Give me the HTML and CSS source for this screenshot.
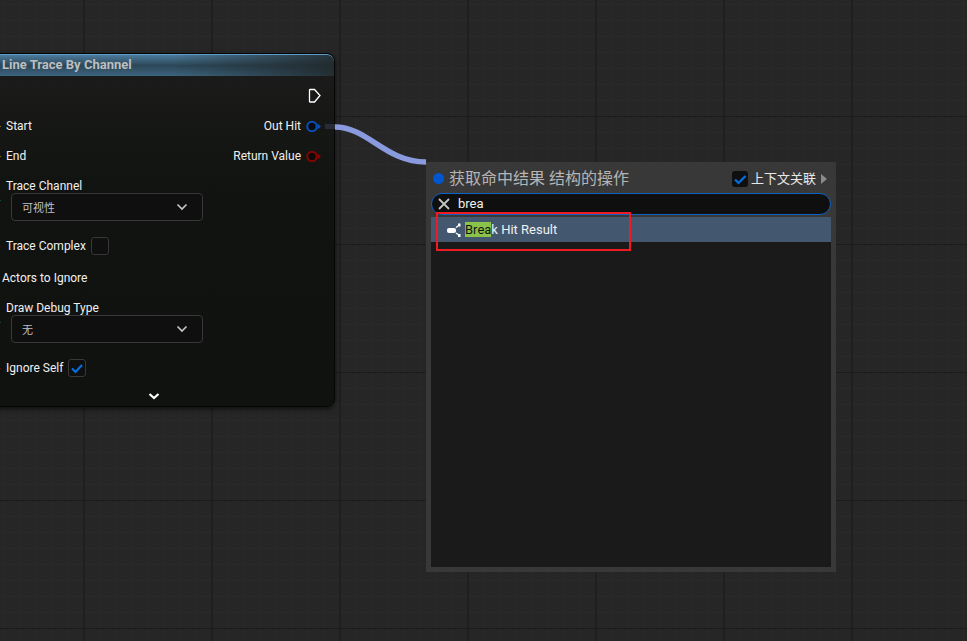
FILE: index.html
```html
<!DOCTYPE html>
<html lang="zh">
<head>
<meta charset="utf-8">
<title>Blueprint Graph</title>
<link rel="stylesheet" href="styles.css">
</head>
<body>
<main class="graph">
  <section class="node">
    <h1 class="node-title">Line Trace By Channel</h1>
    <div class="node-body">
      <div class="pins">
        <div class="pin-row end">
          <svg class="exec" width="14" height="16" viewBox="0 0 14 16"><path d="M3 1.500h4.500l5.500 6-5.500 6.500h-4.500q-.5 0-.5-.8V2.300q0-.8.5-.8z" fill="none" stroke="#fff" stroke-width="1.300"/></svg>
        </div>
        <div class="pin-row stub yellow"><span>Start</span><span class="out">Out Hit
          <svg width="15" height="12" viewBox="0 0 15 12"><circle cx="6" cy="6.500" r="4.700" fill="#080c12" stroke="#0b50b8" stroke-width="2"/><path d="M11.500 3.500 15 6.500l-3.500 3z" fill="#0b50b8"/></svg></span>
        </div>
        <div class="pin-row stub yellow"><span>End</span><span class="out">Return Value
          <svg width="15" height="12" viewBox="0 0 15 12"><circle cx="6" cy="6.500" r="4.700" fill="#0e0808" stroke="#850404" stroke-width="2"/><path d="M11.500 3.500 15 6.500l-3.500 3z" fill="#850404"/></svg></span>
        </div>
      </div>
      <div class="field stub green">
        <label for="channel">Trace Channel</label>
        <div class="dropdown">
          <select id="channel"><option>可视性</option></select>
          <svg class="arrow" width="12" height="8" viewBox="0 0 12 8"><path d="M1.500 1.500 6 6l4.500-4.500" fill="none" stroke="#c4c4c4" stroke-width="1.700"/></svg>
        </div>
      </div>
      <div class="check-row stub red">
        <label for="complex">Trace Complex</label>
        <span class="check"><input type="checkbox" id="complex"><svg viewBox="0 0 18 18"><path d="M4 9.500 7.500 13 14 6"/></svg></span>
      </div>
      <div class="actors">Actors to Ignore</div>
      <div class="field stub green">
        <label for="debug">Draw Debug Type</label>
        <div class="dropdown">
          <select id="debug"><option>无</option></select>
          <svg class="arrow" width="12" height="8" viewBox="0 0 12 8"><path d="M1.500 1.500 6 6l4.500-4.500" fill="none" stroke="#c4c4c4" stroke-width="1.700"/></svg>
        </div>
      </div>
      <div class="check-row stub red">
        <label for="self">Ignore Self</label>
        <span class="check"><input type="checkbox" id="self" checked><svg viewBox="0 0 18 18"><path d="M4 9.500 7.500 13 14 6"/></svg></span>
      </div>
      <button class="expand" type="button" aria-label="Collapse"><svg width="12" height="8" viewBox="0 0 12 8"><path d="M1.500 2 6 6l4.500-4" fill="none" stroke="#fff" stroke-width="2.200"/></svg></button>
    </div>
  </section>

  <svg class="wire" width="101" height="46" viewBox="0 0 101 46">
    <path d="M0 6.500h10" stroke="#282b38" stroke-width="5"/>
    <path d="M10 7C43 7 60 42 101 42" fill="none" stroke="#8a9ade" stroke-width="5.500"/>
  </svg>

  <section class="menu">
    <header class="menu-head">
      <span class="dot"></span>
      <h2>获取命中结果 结构的操作</h2>
      <span class="check flat"><input type="checkbox" id="context" checked><svg viewBox="0 0 16 16"><path d="M3 8.500 6.500 12 13.500 5"/></svg></span>
      <label for="context">上下文关联</label>
      <svg class="more" width="6" height="10" viewBox="0 0 6 10"><path d="M0 0 6 5 0 10z" fill="#8b8b8b"/></svg>
    </header>
    <div class="search">
      <button type="button" aria-label="Clear"><svg width="12" height="12" viewBox="0 0 12 12"><path d="M1 1l10 10M11 1 1 11" stroke="#c4c4c4" stroke-width="1.800"/></svg></button>
      <input type="text" value="brea" aria-label="Search">
    </div>
    <ul class="results">
      <li><a href="#"><svg width="14" height="14" viewBox="0 0 14 14"><rect x="0" y="5" width="9" height="5" rx="2" fill="#fff"/><path d="M9 4.500 11 3M9 10 11 11.500" stroke="#fff" stroke-width="1.300"/><path d="M11 .5h2.500v3h-2.500zM11 11h2.500v3h-2.500z" fill="#fff"/></svg><span><mark>Brea</mark>k Hit Result</span></a></li>
    </ul>
  </section>
  <div class="callout"></div>
</main>
</body>
</html>
```
FILE: styles.css
```css
* { box-sizing: border-box; }
body {
  margin: 0;
  font: 12px/16px Roboto, "Noto Sans CJK SC", sans-serif;
  color: #f0f0f0;
}
h1, h2, ul { margin: 0; padding: 0; }
svg { display: block; flex: none; }
button { padding: 0; border: 0; background: none; }

.graph {
  position: relative;
  min-height: 100vh;
  overflow: hidden;
  background-color: #262626;
  background-image:
    linear-gradient(#1b1b1b 1px, transparent 1px),
    linear-gradient(90deg, #1f1f1f 2px, transparent 2px),
    linear-gradient(#2a2a2a 1px, transparent 1px),
    linear-gradient(90deg, #2a2a2a 1px, transparent 1px);
  background-size: 128px 128px, 128px 128px, 16px 16px, 16px 16px;
  background-position: 0 116px, 83px 0, 0 4px, 3px 0;
}

/* Trace node */
.node {
  position: absolute;
  left: -26px;
  top: 53px;
  width: 361px;
  border: 1px solid #050505;
  border-radius: 8px;
  overflow: hidden;
  background: linear-gradient(rgba(27, 28, 27, .96), rgba(16, 18, 15, .96) 40%, rgba(15, 17, 14, .96));
  box-shadow: 0 2px 5px rgba(0, 0, 0, .6);
}
.node-title {
  padding: 2px 27px 3px;
  border-top: 1px solid #5d9cc6;
  border-radius: 7px 7px 0 0;
  font-size: 13px;
  line-height: 16px;
  font-weight: 700;
  color: #bcbfc0;
  background:
    linear-gradient(90deg, transparent 55%, rgba(32, 38, 40, .85)),
    linear-gradient(#4b7b9c, #2c4757 50%, #3c6580);
}
.node-body { padding: 4px 13px 0 31px; }
.pin-row {
  display: flex;
  align-items: center;
  justify-content: space-between;
  height: 30px;
}
.pin-row.end { height: 31px; justify-content: flex-end; }
.out { display: flex; align-items: center; gap: 5px; }

/* Tips of the input pins beyond the left edge */
.stub { position: relative; }
.stub::before {
  content: "";
  position: absolute;
  left: -8px;
  top: 50%;
  width: 3px;
  height: 1px;
}
.yellow::before { background: #806414; }
.green::before { background: #04503c; }
.red::before { background: #600808; }

.field { margin: 7px 0 16px; }
.field label { display: block; height: 15px; line-height: 16px; }
.dropdown { display: grid; width: 192px; margin-left: 5px; }
.dropdown > * { grid-area: 1 / 1; }
.dropdown select {
  appearance: none;
  height: 28px;
  padding: 0 10px;
  border: 1px solid #383838;
  border-radius: 4px;
  background: #0f0f0f;
  color: #c0c0c0;
  font: 11px "Noto Sans CJK SC", sans-serif;
}
.arrow { place-self: center end; margin-right: 15px; pointer-events: none; }
.check-row { display: flex; align-items: center; gap: 5px; }
.check { display: grid; width: 18px; height: 18px; }
.check > * { grid-area: 1 / 1; }
.check input {
  appearance: none;
  width: 100%;
  height: 100%;
  margin: 0;
  border: 1px solid #383838;
  border-radius: 3px;
  background: #0f0f0f;
}
.check svg { pointer-events: none; visibility: hidden; }
.check input:checked + svg { visibility: visible; }
.check path { fill: none; stroke: #0070e0; stroke-width: 2.2; }
.actors { margin: 15px 0 14px -4px; }
.actors + .field { margin-top: 0; }
.expand { display: block; margin: 15px auto 6px 142px; }

.wire { position: absolute; left: 325px; top: 120px; }

/* Action menu */
.menu {
  position: absolute;
  left: 426px;
  top: 162px;
  width: 410px;
  padding: 0 5px 5px;
  background: #383838;
}
.menu-head {
  display: flex;
  align-items: center;
  height: 31px;
  padding: 2px 4px 0 2px;
}
.dot { width: 11px; height: 11px; border-radius: 50%; background: #0057cd; }
.menu-head h2 {
  flex: 1;
  margin-left: 5px;
  font-size: 16px;
  line-height: 24px;
  font-weight: 400;
  color: #b5b5b5;
}
.menu-head .check { width: 16px; height: 16px; margin-right: 3px; }
.flat input { border: 0; }
.menu-head label { font-size: 13px; color: #e8e8e8; }
.more { margin-left: 5px; }
.search {
  display: flex;
  align-items: center;
  height: 22px;
  padding: 0 6px;
  border: 1px solid #0d62c4;
  border-radius: 11px;
  background: #0f0f0f;
}
.search input {
  flex: 1;
  min-width: 0;
  padding: 0 8px;
  border: 0;
  outline: 0;
  background: none;
  color: #f0f0f0;
  font: 13px/18px Roboto, sans-serif;
}
.results {
  min-height: 350px;
  margin-top: 2px;
  background: #1a1a1a;
  list-style: none;
}
.results a {
  display: flex;
  align-items: center;
  gap: 4px;
  height: 25px;
  padding-left: 16px;
  background: #43586f;
  color: #f0f0f0;
  font-size: 13px;
  text-decoration: none;
}
mark { background: #8bc24a; color: #101510; }

.callout {
  position: absolute;
  left: 436px;
  top: 212px;
  width: 195px;
  height: 39px;
  border: 2px solid #ed1c24;
  pointer-events: none;
}
```
